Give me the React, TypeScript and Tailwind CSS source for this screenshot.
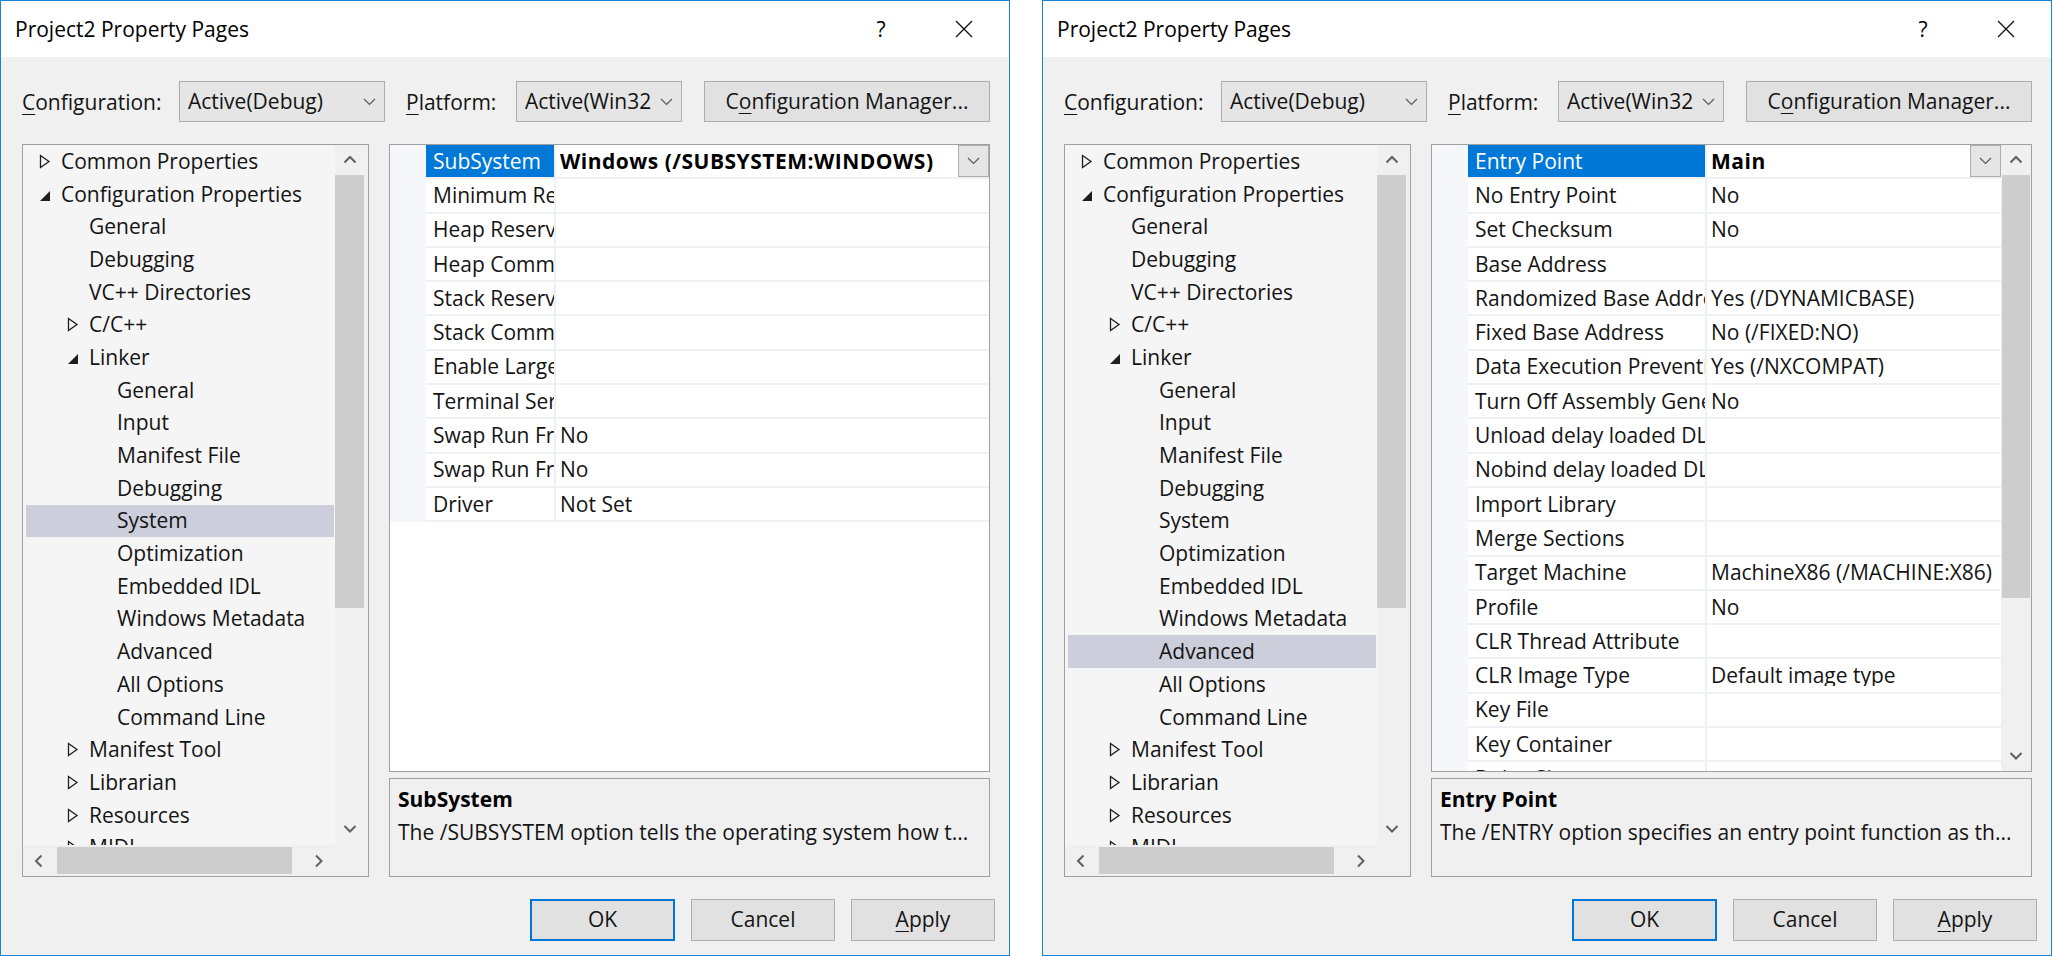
import React from 'react';

const FONT = "font-['Open_Sans','Noto_Sans',sans-serif]";

type Dir = 'up' | 'down' | 'left' | 'right';

function ScrollChevron({ dir }: { dir: Dir }) {
  const vert = dir === 'up' || dir === 'down';
  const d: Record<Dir, string> = {
    up: 'M1.5 7.5 L7 2 L12.5 7.5',
    down: 'M1.5 2 L7 7.5 L12.5 2',
    left: 'M7.5 1.5 L2 7 L7.5 12.5',
    right: 'M2 1.5 L7.5 7 L2 12.5',
  };
  return (
    <svg width={vert ? 14 : 10} height={vert ? 10 : 14} viewBox={vert ? '0 0 14 10' : '0 0 10 14'}>
      <path d={d[dir]} fill="none" stroke="#606060" strokeWidth="2" />
    </svg>
  );
}

function ComboChevron() {
  return (
    <svg width="13" height="8" viewBox="0 0 13 8">
      <path d="M1 1 L6.5 6.5 L12 1" fill="none" stroke="#5a5a5a" strokeWidth="1.2" />
    </svg>
  );
}

function Combo({ text, widthClass }: { text: string; widthClass: string }) {
  return (
    <div className={`${widthClass} h-full shrink-0 border border-[#adadad] bg-[#e5e5e5] flex items-center pl-[8px]`}>
      <span className="flex-1 min-w-0 overflow-hidden whitespace-nowrap">{text}</span>
      <div className="w-[30px] shrink-0 flex items-center justify-center">
        <ComboChevron />
      </div>
    </div>
  );
}

type TreeItem = { label: string; level: 0 | 1 | 2; exp?: 'open' | 'closed' };

const treeItems: TreeItem[] = [
  { label: 'Common Properties', level: 0, exp: 'closed' },
  { label: 'Configuration Properties', level: 0, exp: 'open' },
  { label: 'General', level: 1 },
  { label: 'Debugging', level: 1 },
  { label: 'VC++ Directories', level: 1 },
  { label: 'C/C++', level: 1, exp: 'closed' },
  { label: 'Linker', level: 1, exp: 'open' },
  { label: 'General', level: 2 },
  { label: 'Input', level: 2 },
  { label: 'Manifest File', level: 2 },
  { label: 'Debugging', level: 2 },
  { label: 'System', level: 2 },
  { label: 'Optimization', level: 2 },
  { label: 'Embedded IDL', level: 2 },
  { label: 'Windows Metadata', level: 2 },
  { label: 'Advanced', level: 2 },
  { label: 'All Options', level: 2 },
  { label: 'Command Line', level: 2 },
  { label: 'Manifest Tool', level: 1, exp: 'closed' },
  { label: 'Librarian', level: 1, exp: 'closed' },
  { label: 'Resources', level: 1, exp: 'closed' },
  { label: 'MIDL', level: 1, exp: 'closed' },
  { label: 'Browse Information', level: 1, exp: 'closed' },
];

const levelPad: Record<number, string> = { 0: 'pl-[13px]', 1: 'pl-[41px]', 2: 'pl-[69px]' };

function Expander({ exp }: { exp?: 'open' | 'closed' }) {
  return (
    <div className="w-[22px] shrink-0 flex items-center">
      {exp === 'closed' && (
        <svg width="12" height="15" viewBox="0 0 12 15">
          <path d="M1.5 1.5 L10 7.5 L1.5 13.5 Z" fill="none" stroke="#1e1e1e" strokeWidth="1.3" strokeLinejoin="miter" />
        </svg>
      )}
      {exp === 'open' && (
        <svg width="12" height="14" viewBox="0 0 12 14" className="mt-[3px]">
          <path d="M11 2 L11 12 L1 12 Z" fill="#1e1e1e" />
        </svg>
      )}
    </div>
  );
}

function Tree({ selected }: { selected: number }) {
  return (
    <div className="w-[347px] h-full shrink-0 border border-[#a0a0a0] flex flex-col bg-[#f0f0f0]">
      <div className="flex-1 flex min-h-0">
        <div className="flex-1 min-w-0 overflow-hidden bg-[#f5f5f5] px-[3px] pr-[1px]">
          {treeItems.map((it, i) => (
            <div
              key={i}
              className={`h-[32.7px] flex items-center whitespace-nowrap ${levelPad[it.level]} ${
                i === selected ? 'bg-[#cccedb]' : ''
              }`}
            >
              <Expander exp={it.exp} />
              <span className="leading-none">{it.label}</span>
            </div>
          ))}
        </div>
        <div className="w-[33px] shrink-0 flex flex-col bg-[#f0f0f0]">
          <div className="h-[30px] flex items-center justify-center pr-[4px]">
            <ScrollChevron dir="up" />
          </div>
          <div className="h-[433px] bg-[#cdcdcd] mr-[4px]" />
          <div className="flex-1" />
          <div className="h-[32px] flex items-center justify-center pr-[4px]">
            <ScrollChevron dir="down" />
          </div>
        </div>
      </div>
      <div className="h-[31px] shrink-0 flex">
        <div className="flex-1 flex bg-[#f0f0f0]">
          <div className="w-[31px] flex items-center justify-center">
            <ScrollChevron dir="left" />
          </div>
          <div className="ml-[3px] w-[235px] my-[2px] bg-[#cdcdcd]" />
          <div className="flex-1" />
          <div className="w-[32px] flex items-center justify-center">
            <ScrollChevron dir="right" />
          </div>
        </div>
        <div className="w-[33px] bg-[#f0f0f0]" />
      </div>
    </div>
  );
}

type Row = { n: string; v?: string; sel?: boolean };

const leftRows: Row[] = [
  { n: 'SubSystem', v: 'Windows (/SUBSYSTEM:WINDOWS)', sel: true },
  { n: 'Minimum Required Version' },
  { n: 'Heap Reserve Size' },
  { n: 'Heap Commit Size' },
  { n: 'Stack Reserve Size' },
  { n: 'Stack Commit Size' },
  { n: 'Enable Large Addresses' },
  { n: 'Terminal Server' },
  { n: 'Swap Run From CD', v: 'No' },
  { n: 'Swap Run From Network', v: 'No' },
  { n: 'Driver', v: 'Not Set' },
];

const rightRows: Row[] = [
  { n: 'Entry Point', v: 'Main', sel: true },
  { n: 'No Entry Point', v: 'No' },
  { n: 'Set Checksum', v: 'No' },
  { n: 'Base Address' },
  { n: 'Randomized Base Address', v: 'Yes (/DYNAMICBASE)' },
  { n: 'Fixed Base Address', v: 'No (/FIXED:NO)' },
  { n: 'Data Execution Prevention (DEP)', v: 'Yes (/NXCOMPAT)' },
  { n: 'Turn Off Assembly Generation', v: 'No' },
  { n: 'Unload delay loaded DLL' },
  { n: 'Nobind delay loaded DLL' },
  { n: 'Import Library' },
  { n: 'Merge Sections' },
  { n: 'Target Machine', v: 'MachineX86 (/MACHINE:X86)' },
  { n: 'Profile', v: 'No' },
  { n: 'CLR Thread Attribute' },
  { n: 'CLR Image Type', v: 'Default image type' },
  { n: 'Key File' },
  { n: 'Key Container' },
  { n: 'Delay Sign' },
];

function GridRow({ row, nameW }: { row: Row; nameW: string }) {
  return (
    <div className="flex h-[34.3px] shrink-0">
      <div className="w-[36px] shrink-0 bg-[#f5f7fa]" />
      <div className="flex-1 min-w-0 flex border-b-2 border-[#eef0f3]">
        <div
          className={`${nameW} shrink-0 border-r-2 border-[#eef0f3] pl-[7px] flex items-center overflow-hidden whitespace-nowrap ${
            row.sel ? 'bg-[#0078d7] text-white' : ''
          }`}
        >
          <span className="leading-none">{row.n}</span>
        </div>
        <div className="flex-1 min-w-0 flex items-center pl-[4px]">
          <span
            className={`flex-1 min-w-0 overflow-hidden whitespace-nowrap leading-none ${
              row.sel ? 'font-bold text-black tracking-[0.5px]' : ''
            }`}
          >
            {row.v ?? ''}
          </span>
          {row.sel && (
            <div className="w-[31px] h-full shrink-0 border border-[#adadad] bg-[#e5e5e5] flex items-center justify-center">
              <ComboChevron />
            </div>
          )}
        </div>
      </div>
    </div>
  );
}

function Grid({ rows, nameW, scroll }: { rows: Row[]; nameW: string; scroll: boolean }) {
  return (
    <div className="flex-1 min-h-0 border border-[#a0a0a0] bg-white flex">
      <div className="flex-1 min-w-0 overflow-hidden flex flex-col">
        {rows.map((r, i) => (
          <GridRow key={i} row={r} nameW={nameW} />
        ))}
      </div>
      {scroll && (
        <div className="w-[30px] shrink-0 flex flex-col bg-[#f0f0f0]">
          <div className="h-[30px] flex items-center justify-center">
            <ScrollChevron dir="up" />
          </div>
          <div className="h-[423px] bg-[#cdcdcd] mx-[1px]" />
          <div className="flex-1" />
          <div className="h-[31px] flex items-center justify-center">
            <ScrollChevron dir="down" />
          </div>
        </div>
      )}
    </div>
  );
}

function Dialog({ side }: { side: 'left' | 'right' }) {
  const isLeft = side === 'left';
  return (
    <div className="w-[1010px] h-[956px] shrink-0 border border-[#1883d7] flex flex-col bg-[#f0f0f0] text-[21px] text-[#141414]">
      {/* title bar */}
      <div className="h-[56px] shrink-0 bg-white flex items-center pl-[14px]">
        <span className="text-black leading-none">Project2 Property Pages</span>
        <div className="ml-auto flex items-center pr-[25px]">
          <span className="w-[20px] text-center text-black leading-none">?</span>
          <div className="ml-[53px] w-[40px] flex items-center justify-center">
            <svg width="18" height="18" viewBox="0 0 18 18">
              <path d="M1 1 L17 17 M17 1 L1 17" stroke="#111" strokeWidth="1.3" />
            </svg>
          </div>
        </div>
      </div>

      {/* configuration row */}
      <div className="mt-[24px] ml-[21px] h-[41px] flex items-center shrink-0">
        <div className="w-[157px] shrink-0 pt-[2px]">
          <span className="underline underline-offset-[4px] decoration-1">C</span>onfiguration:
        </div>
        <Combo text="Active(Debug)" widthClass="w-[206px]" />
        <div className="ml-[21px] w-[110px] shrink-0 pt-[2px]">
          <span className="underline underline-offset-[4px] decoration-1">P</span>latform:
        </div>
        <Combo text="Active(Win32)" widthClass="w-[166px]" />
        <div className="ml-[22px] w-[286px] h-full shrink-0 border border-[#adadad] bg-[#e1e1e1] flex items-center justify-center">
          <span>
            C<span className="underline underline-offset-[4px] decoration-1">o</span>nfiguration Manager...
          </span>
        </div>
      </div>

      {/* panels */}
      <div className="mt-[22px] ml-[21px] h-[733px] shrink-0 flex gap-[20px]">
        <Tree selected={isLeft ? 11 : 15} />
        <div className="w-[601px] shrink-0 flex flex-col">
          <Grid rows={isLeft ? leftRows : rightRows} nameW={isLeft ? 'w-[130px]' : 'w-[239px]'} scroll={!isLeft} />
          <div className="mt-[6px] h-[99px] shrink-0 border border-[#a0a0a0] bg-[#f0f0f0] pl-[8px] pt-[4px]">
            <div className="h-[33px] flex items-center font-bold text-black">
              {isLeft ? 'SubSystem' : 'Entry Point'}
            </div>
            <div className="h-[33px] flex items-center whitespace-nowrap overflow-hidden">
              {isLeft
                ? 'The /SUBSYSTEM option tells the operating system how t...'
                : 'The /ENTRY option specifies an entry point function as th...'}
            </div>
          </div>
        </div>
      </div>

      {/* buttons */}
      <div className="mt-[22px] h-[42px] shrink-0 flex justify-end gap-[16px] pr-[14px]">
        <div className="w-[145px] h-full border-2 border-[#0078d7] bg-[#e1e1e1] flex items-center justify-center">OK</div>
        <div className="w-[144px] h-full border border-[#adadad] bg-[#e1e1e1] flex items-center justify-center">Cancel</div>
        <div className="w-[144px] h-full border border-[#adadad] bg-[#e1e1e1] flex items-center justify-center">
          <span>
            <span className="underline underline-offset-[4px] decoration-1">A</span>pply
          </span>
        </div>
      </div>
    </div>
  );
}

export default function App() {
  return (
    <div className={`${FONT} bg-white w-[2053px] h-[956px] flex gap-[32px] overflow-hidden`}>
      <Dialog side="left" />
      <Dialog side="right" />
    </div>
  );
}
